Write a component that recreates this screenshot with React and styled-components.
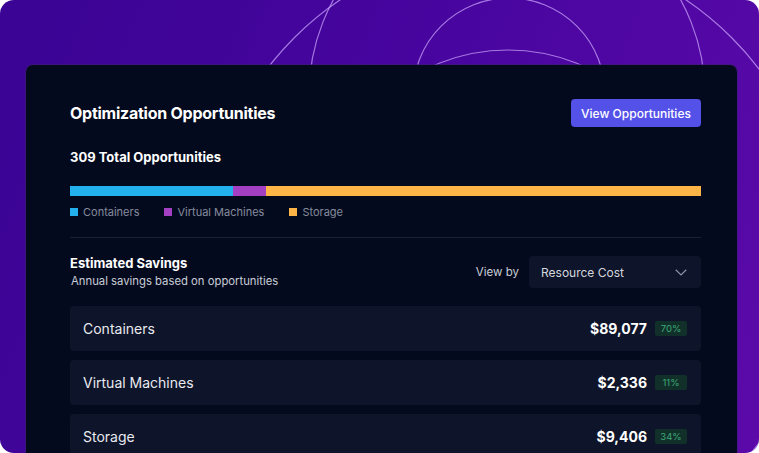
import React from "react";
import styled, { createGlobalStyle } from "styled-components";

const GlobalStyle = createGlobalStyle`
  html, body {
    margin: 0;
    padding: 0;
    background: #ffffff;
  }
  body {
    font-family: Inter, "Noto Sans", "Liberation Sans", sans-serif;
    -webkit-font-smoothing: antialiased;
  }
`;

const segments = [
  { name: "Containers", color: "#22b1ec", share: 163 },
  { name: "Virtual Machines", color: "#a23fc2", share: 33 },
  { name: "Storage", color: "#fdb548", share: 435 },
];

const savings = [
  { name: "Containers", amount: "$89,077", pct: "70%" },
  { name: "Virtual Machines", amount: "$2,336", pct: "11%" },
  { name: "Storage", amount: "$9,406", pct: "34%" },
];

const Orbits = () => (
  <OrbitSvg width="759" height="453" viewBox="0 0 759 453">
    <circle cx="509" cy="94" r="96" />
    <circle cx="507" cy="95" r="198" />
    <circle cx="508" cy="235" r="185" />
    <circle cx="513" cy="256" r="309" />
  </OrbitSvg>
);

const App = () => {
  return (
    <>
      <GlobalStyle />
      <Frame>
        <Orbits />
        <Card>
          <Header>
            <Title>Optimization Opportunities</Title>
            <PrimaryButton>View Opportunities</PrimaryButton>
          </Header>

          <Total>309 Total Opportunities</Total>

          <Bar>
            {segments.map((s) => (
              <Segment key={s.name} color={s.color} share={s.share} />
            ))}
          </Bar>

          <Legend>
            {segments.map((s) => (
              <LegendItem key={s.name}>
                <Swatch color={s.color} />
                {s.name}
              </LegendItem>
            ))}
          </Legend>

          <Divider />

          <SavingsHeader>
            <div>
              <SectionTitle>Estimated Savings</SectionTitle>
              <SectionSub>Annual savings based on opportunities</SectionSub>
            </div>
            <ViewBy>
              <span>View by</span>
              <Select>
                Resource Cost
                <svg width="12" height="7" viewBox="0 0 12 7">
                  <polyline
                    points="0.75,0.75 6,6 11.25,0.75"
                    fill="none"
                    stroke="#8c92a3"
                    strokeWidth="1.2"
                  />
                </svg>
              </Select>
            </ViewBy>
          </SavingsHeader>

          <Rows>
            {savings.map((r) => (
              <Row key={r.name}>
                <RowLabel>{r.name}</RowLabel>
                <RowRight>
                  <Amount>{r.amount}</Amount>
                  <Badge>{r.pct}</Badge>
                </RowRight>
              </Row>
            ))}
          </Rows>
        </Card>
      </Frame>
    </>
  );
};

const Frame = styled.div`
  position: relative;
  width: 759px;
  height: 453px;
  border-radius: 14px;
  overflow: hidden;
  box-sizing: border-box;
  padding: 65px 22px 0 26px;
  background: linear-gradient(110deg, #3a0494 0%, #48059f 50%, #5b0aa9 100%);
`;

const OrbitSvg = styled.svg`
  position: absolute;
  top: 0;
  left: 0;
  circle {
    fill: none;
    stroke: rgba(206, 170, 255, 0.7);
    stroke-width: 1.2;
  }
`;

const Card = styled.div`
  position: relative;
  height: 420px;
  box-sizing: border-box;
  padding: 34px 36px 0 44px;
  background: #040a1d;
  border-radius: 7px;
  box-shadow: 0 0 0 1px rgba(60, 30, 110, 0.6);
`;

const Header = styled.div`
  display: flex;
  align-items: center;
  justify-content: space-between;
  height: 28px;
`;

const Title = styled.h2`
  margin: 0;
  font-size: 16px;
  font-weight: 700;
  color: #ffffff;
  letter-spacing: -0.25px;
`;

const PrimaryButton = styled.button`
  height: 28px;
  width: 130px;
  border: none;
  border-radius: 4px;
  background: #5451e9;
  color: #ffffff;
  font-family: inherit;
  font-size: 12px;
  font-weight: 500;
  padding: 0;
`;

const Total = styled.div`
  margin-top: 22px;
  font-size: 13px;
  font-weight: 700;
  color: #ffffff;
  line-height: 16px;
`;

const Bar = styled.div`
  display: flex;
  margin-top: 21px;
  height: 10px;
`;

const Segment = styled.div`
  flex: ${(p) => p.share} 0 0;
  background: ${(p) => p.color};
`;

const Legend = styled.div`
  display: flex;
  gap: 25px;
  margin-top: 9px;
`;

const LegendItem = styled.div`
  display: flex;
  align-items: center;
  gap: 5px;
  font-size: 11px;
  line-height: 14px;
  color: #858c9e;
`;

const Swatch = styled.span`
  width: 8px;
  height: 8px;
  background: ${(p) => p.color};
`;

const Divider = styled.div`
  margin-top: 18px;
  height: 1px;
  background: #1b2133;
`;

const SavingsHeader = styled.div`
  display: flex;
  justify-content: space-between;
  align-items: center;
  margin-top: 17px;
`;

const SectionTitle = styled.div`
  font-size: 13px;
  font-weight: 700;
  line-height: 16px;
  color: #ffffff;
`;

const SectionSub = styled.div`
  margin-top: 3px;
  padding-left: 1px;
  font-size: 11.3px;
  line-height: 15px;
  color: #c9cdd7;
`;

const ViewBy = styled.div`
  display: flex;
  align-items: center;
  gap: 10px;
  font-size: 11.5px;
  color: #c9cdd7;
`;

const Select = styled.div`
  display: flex;
  align-items: center;
  justify-content: space-between;
  box-sizing: border-box;
  width: 172px;
  height: 32px;
  padding: 0 14px 0 12px;
  border-radius: 4px;
  background: #0e1429;
  color: #d4d7df;
  font-size: 12px;
`;

const Rows = styled.div`
  display: flex;
  flex-direction: column;
  gap: 9px;
  margin-top: 17px;
`;

const Row = styled.div`
  display: flex;
  align-items: center;
  justify-content: space-between;
  height: 45px;
  padding: 0 14px 0 13px;
  border-radius: 4px;
  background: #0e1429;
`;

const RowLabel = styled.span`
  font-size: 14px;
  color: #e8eaf0;
`;

const RowRight = styled.div`
  display: flex;
  align-items: center;
  gap: 8px;
`;

const Amount = styled.span`
  font-size: 14px;
  font-weight: 700;
  color: #ffffff;
`;

const Badge = styled.span`
  display: inline-flex;
  align-items: center;
  justify-content: center;
  width: 32px;
  height: 15px;
  border-radius: 2px;
  background: #12302a;
  color: #3ca978;
  font-size: 9.5px;
`;

export default App;
